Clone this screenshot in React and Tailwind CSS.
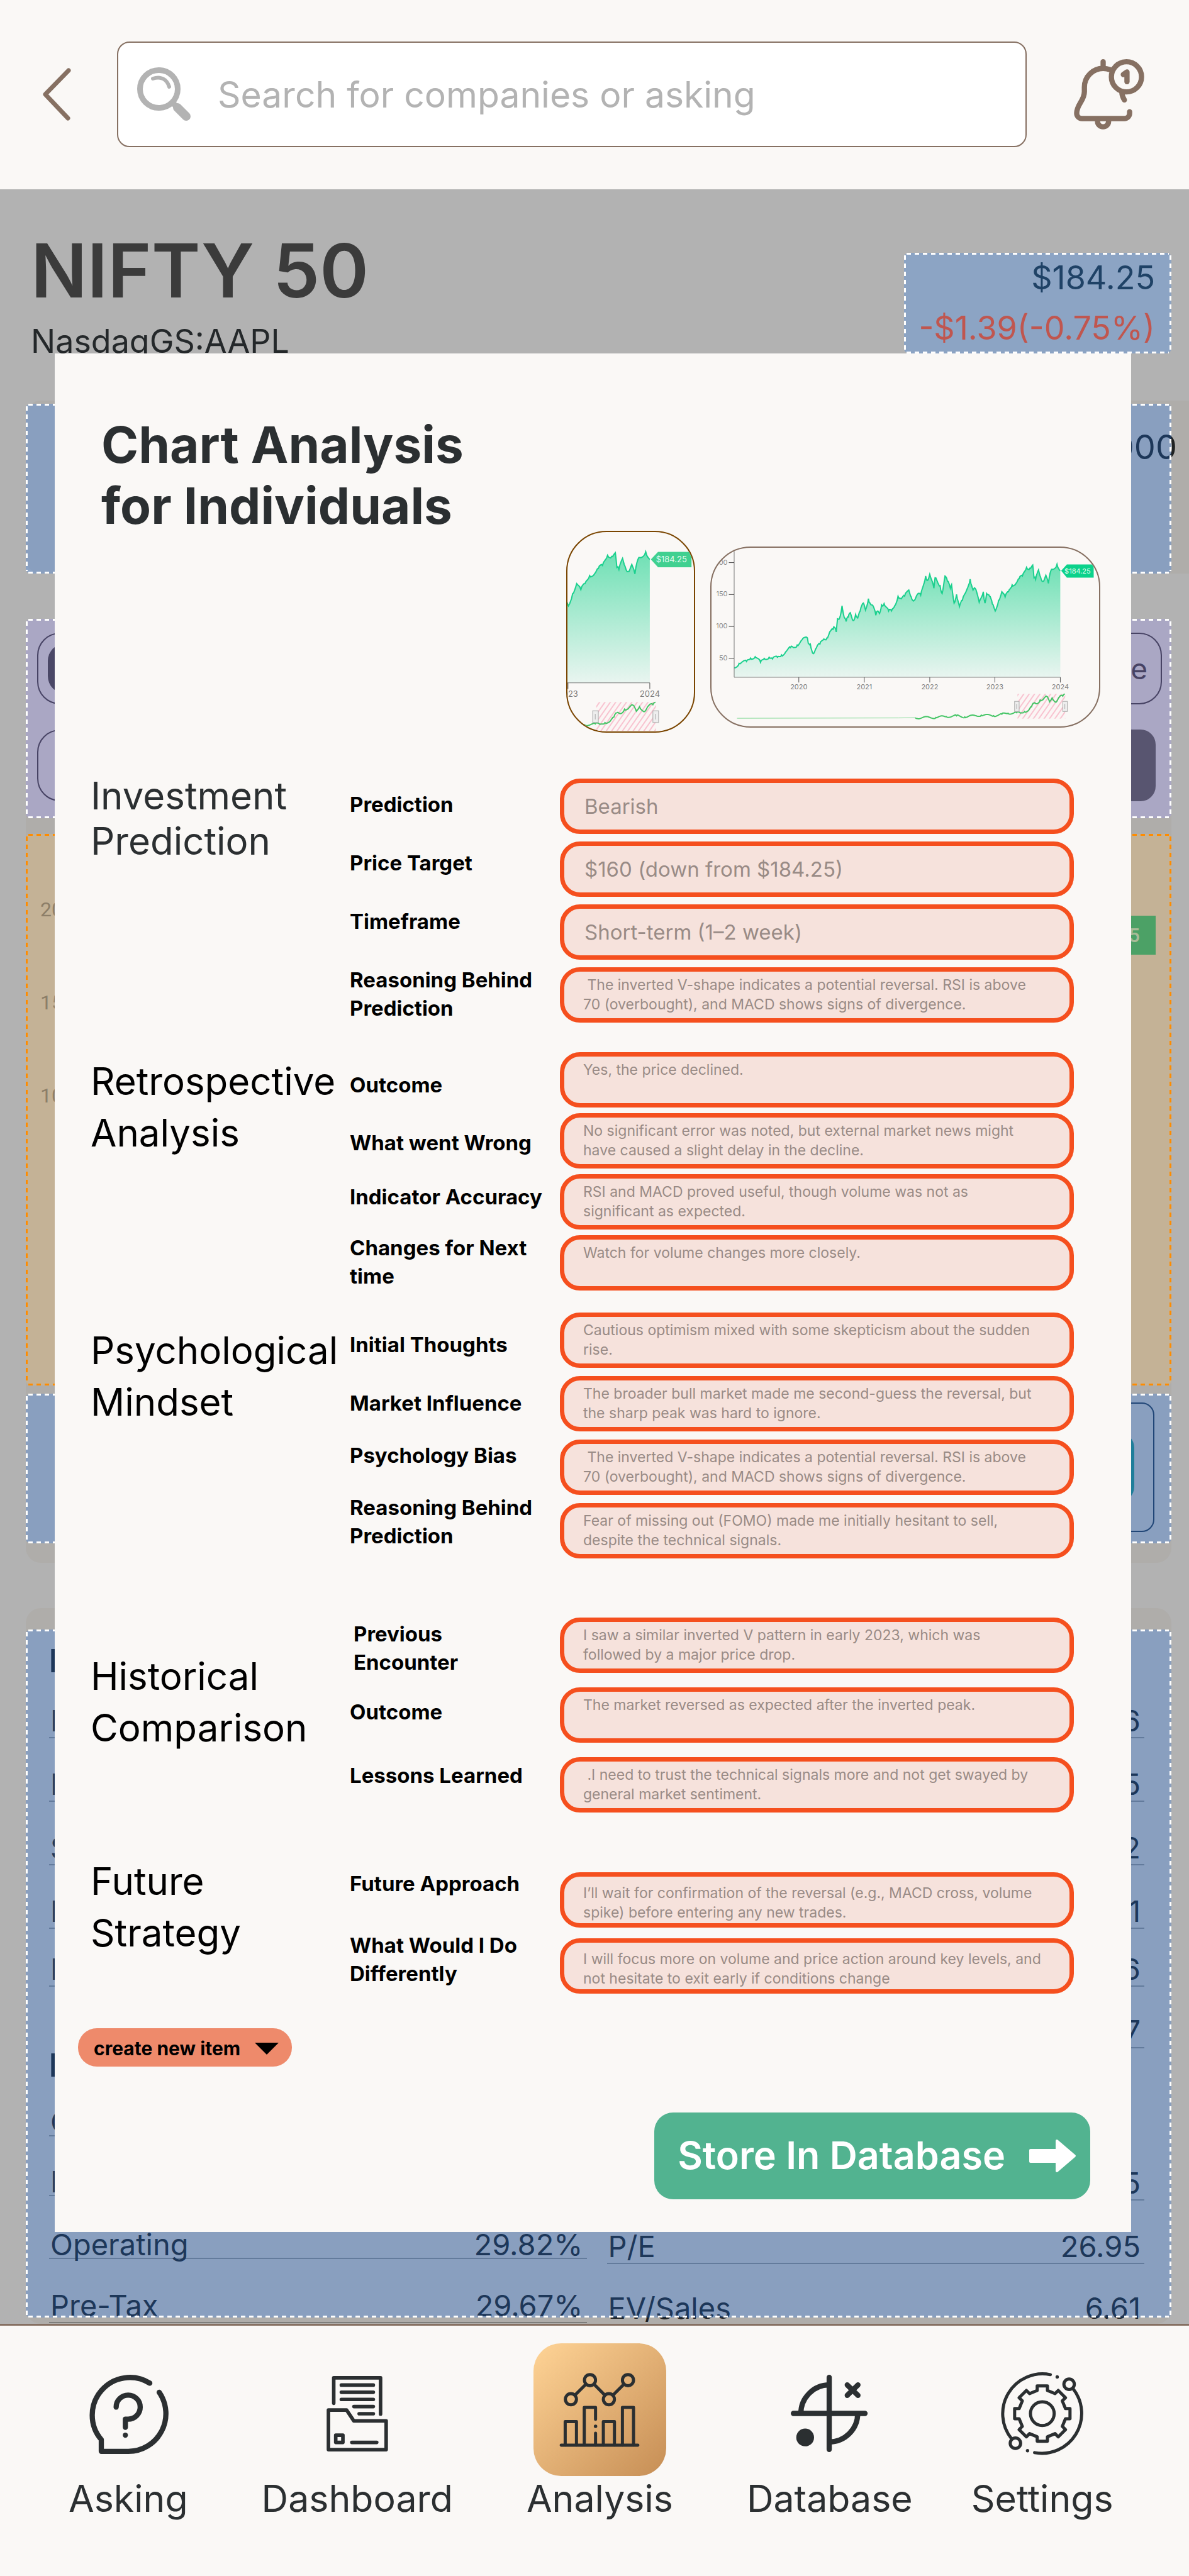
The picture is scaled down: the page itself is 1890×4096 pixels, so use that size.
import React from "react";

const SERIES = [
  [460,885],[472,860],[490,850],[500,830],[511,822],[524,855],[533,832],[545,825],[553,835],[565,825],[575,812],[585,795],
  [597,770],[604,770],[613,755],[625,725],[638,715],[640,745],[645,750],[652,805],[660,770],[668,750],[678,720],[685,715],
  [692,680],[700,665],[704,655],[708,680],[711,605],[716,600],[722,530],[727,595],[732,620],[737,595],[742,570],[749,615],
  [755,580],[760,600],[766,560],[774,515],[779,555],[786,490],[790,515],[797,530],[804,585],[808,560],[813,575],[818,525],
  [824,518],[835,560],[842,560],[850,530],[858,475],[866,490],[874,475],[884,440],[890,480],[897,500],[905,465],[913,470],
  [920,410],[925,360],[929,385],[935,350],[939,380],[945,430],[948,370],[955,400],[960,415],[965,460],[972,360],[978,390],
  [985,430],[988,410],[994,515],[1000,465],[1007,535],[1014,500],[1022,455],[1033,378],[1040,440],[1045,430],[1055,510],
  [1065,450],[1069,515],[1073,460],[1080,475],[1087,520],[1094,560],[1102,500],[1110,450],[1118,480],[1126,450],[1135,410],
  [1145,400],[1152,375],[1160,360],[1170,310],[1178,315],[1185,297],[1188,370],[1192,380],[1199,325],[1204,365],[1210,390],
  [1217,355],[1223,402],[1229,330],[1236,320],[1244,292],[1252,330],
];

const OVERVIEW_START = [[467,1175],[860,1173],[900,1172]];
const OVERVIEW = [
  [900,1172],[950,1170],[975,1165],[1000,1161],[1020,1167],[1060,1157],[1090,1160],[1110,1152],
  [1125,1146],[1146,1143],[1155,1145],[1165,1136],[1175,1130],[1182,1110],[1188,1088],[1195,1092],[1203,1070],[1210,1068],
  [1219,1050],[1226,1080],[1232,1058],[1242,1082],[1250,1052],[1258,1048],[1263,1036],
];

function roughen(points, step, amount) {
  const out = [];
  let n = 0;
  for (let i = 0; i < points.length - 1; i++) {
    const [x0, y0] = points[i];
    const [x1, y1] = points[i + 1];
    const parts = Math.max(1, Math.round((x1 - x0) / step));
    for (let k = 0; k < parts; k++) {
      n += 1;
      const wobble = k === 0 ? 0 : Math.sin(n * 12.9) * amount;
      out.push([x0 + ((x1 - x0) * k) / parts, y0 + ((y1 - y0) * k) / parts + wobble]);
    }
  }
  out.push(points[points.length - 1]);
  return out;
}

const PRICE_LINE = roughen(SERIES, 2, 9);
const OVERVIEW_LINE = roughen(OVERVIEW, 2, 6);

const WIDE = {
  id: "wide",
  x: (v) => (v - 405) * 0.6546,
  y: (v) => (v - 198) * 0.2775,
};
const CLOSE = {
  id: "close",
  x: (v) => (200 + (v - 1252) * 1.25) * 0.6546,
  y: (v) => (864 + (v - 940) * 1.16) * 0.2775,
};

function PriceChart({ view, textClass, tagFill }) {
  const { id, x, y } = view;
  const path = (pts) => pts.map(([a, b]) => `${x(a).toFixed(1)},${y(b).toFixed(1)}`).join(" ");
  const base = y(940);
  const area = `${x(460)},${base} ${path(PRICE_LINE)} ${x(1252)},${base}`;
  return (
    <svg className="block h-full w-full" aria-hidden="true">
      <defs>
        <linearGradient id={`fill-${id}`} x1="0" y1="0" x2="0" y2="1">
          <stop offset="0" stopColor="#6ee0b4" />
          <stop offset="1" stopColor="#e9f5f0" />
        </linearGradient>
        <pattern id={`hatch-${id}`} width="7" height="7" patternUnits="userSpaceOnUse" patternTransform="rotate(35)">
          <rect width="7" height="7" fill="#fbf6f5" />
          <rect width="2" height="7" fill="#f8c3d0" />
        </pattern>
      </defs>
      <polygon points={area} fill={`url(#fill-${id})`} />
      <polyline points={path(PRICE_LINE)} fill="none" stroke="#1bd08e" strokeWidth="2" />
      <path d={`M${x(460)} ${y(200)}V${base}H${x(1252)}`} fill="none" stroke="#777" strokeWidth="1" />
      {[[283, "200"], [466, "150"], [649, "100"], [831, "50"]].map(([v, t]) => (
        <g key={t}>
          <path d={`M${x(447)} ${y(v)}H${x(460)}`} stroke="#444" strokeWidth="1" />
          <text x={x(444)} y={y(v) + 3} textAnchor="end" fill="#8a8a8a" className={textClass}>{t}</text>
        </g>
      ))}
      {[[617, "2020"], [776, "2021"], [935, "2022"], [1093, "2023"], [1252, "2024"]].map(([v, t]) => (
        <g key={t}>
          <path d={`M${x(v)} ${base}V${y(970)}`} stroke="#555" strokeWidth="1" />
          <text x={x(v)} y={y(1008)} textAnchor="middle" fill="#7c7c7c" className={textClass}>{t}</text>
        </g>
      ))}
      <polygon
        points={path([[1254, 330], [1268, 293], [1333, 293], [1333, 369], [1268, 369]])}
        fill={tagFill}
      />
      <text x={x(1294)} y={y(345)} textAnchor="middle" fill="#e4fbf0" className={textClass}>$184.25</text>
      <rect x={x(1148)} y={y(1035)} width={x(1264) - x(1148)} height={y(1177) - y(1035)} fill={`url(#hatch-${id})`} />
      <polyline points={path(OVERVIEW_START)} fill="none" stroke="#7fd893" strokeWidth="1" />
      <polyline points={path(OVERVIEW_LINE)} fill="none" stroke="#45c566" strokeWidth="2" />
      {[1141, 1258].map((v) => (
        <g key={v} stroke="#a9a9a9" fill="#eeeeee">
          <rect x={x(v)} y={y(1078)} width={x(v + 11) - x(v)} height={y(1136) - y(1078)} />
          <path d={`M${x(v + 5)} ${y(1093)}V${y(1121)}`} />
        </g>
      ))}
    </svg>
  );
}

function DashedEdges({ tone }) {
  const h = {
    white: "bg-[repeating-linear-gradient(90deg,#fff_0_7px,transparent_7px_13px)]",
    orange: "bg-[repeating-linear-gradient(90deg,#ff8c00_0_7px,transparent_7px_13px)]",
  }[tone];
  const v = {
    white: "bg-[repeating-linear-gradient(180deg,#fff_0_7px,transparent_7px_13px)]",
    orange: "bg-[repeating-linear-gradient(180deg,#ff8c00_0_7px,transparent_7px_13px)]",
  }[tone];
  return (
    <>
      <span className={`absolute inset-x-1 top-0 h-[3px] ${h}`} />
      <span className={`absolute inset-x-1 bottom-0 h-[3px] ${h}`} />
      <span className={`absolute inset-y-1 left-0 w-[3px] ${v}`} />
      <span className={`absolute inset-y-1 right-0 w-[3px] ${v}`} />
    </>
  );
}

function BlueVeil() {
  return (
    <div className="pointer-events-none absolute inset-0 rounded-lg bg-[#1978ff]/25">
      <DashedEdges tone="white" />
    </div>
  );
}

function BackIcon() {
  return (
    <svg className="h-[84px] w-[46px]" viewBox="0 0 46 84" fill="none" stroke="#867062" strokeWidth="7" strokeLinecap="round" strokeLinejoin="round">
      <path d="M41 4L4 42L40 80" />
    </svg>
  );
}

function SearchIcon() {
  return (
    <svg className="h-[86px] w-[86px] shrink-0" viewBox="0 0 86 86" fill="none" stroke="#b3b3b3" strokeLinecap="round">
      <circle cx="34.5" cy="34.5" r="30" strokeWidth="9" />
      <path d="M56 56L62 62" strokeWidth="9" />
      <path d="M64 64L78 78" strokeWidth="14" />
      <path d="M25 18C37 14 47 18 51 31" strokeWidth="6" />
    </svg>
  );
}

function BellIcon() {
  return (
    <svg className="h-28 w-28" viewBox="72 72 402 402" fill="none" stroke="#867062" strokeWidth="30" strokeLinecap="round" strokeLinejoin="round">
      <path d="M239 87V118" />
      <path d="M280 133C267 128 253 125 239 125C180 125 132 173 132 232V258C132 310 88 330 88 381C88 398 101 411 118 411H360C377 411 390 398 390 381V372" />
      <path d="M346 264C347 281 352 292 360 305" />
      <path d="M207 418V427A31.500 31.500 0 0 0 270 427V418" />
      <circle cx="372" cy="173" r="86" />
      <path d="M354 160L375 145V201" />
    </svg>
  );
}

function AskingIcon() {
  return (
    <svg className="h-32 w-32" viewBox="0 0 154 154" fill="none" stroke="#2b2f31" strokeWidth="10" strokeLinecap="round" strokeLinejoin="round">
      <path d="M118 18.500A72 72 0 0 0 25.300 126.500V149H77A72 72 0 0 0 136 36" />
      <path d="M53.700 64.300A23 23 0 1 1 76.700 87.300H71.300V103" />
      <circle cx="71.300" cy="118" r="5" fill="#2b2f31" stroke="none" />
    </svg>
  );
}

function DashboardIcon() {
  return (
    <svg className="h-[120px] w-[98px]" viewBox="0 0 117 144" fill="none" stroke="#2b2f31" strokeWidth="6.8" strokeLinecap="round" strokeLinejoin="round">
      <path d="M13.500 52V3.500H102.800V72.500" />
      <path d="M28 17.300H89M28 31H89M28 44.700H89M52 58.300H89M62 72H89" />
      <path d="M3.400 65H38L51.800 85.700H113.500V140.500H3.400Z" />
      <path d="M17.300 113H31V126.700H17.300ZM48 126.700H95.500" />
    </svg>
  );
}

function AnalysisIcon() {
  return (
    <svg className="h-[118px] w-[128px]" viewBox="180 209 462 428" fill="none" stroke="#2b2f31" strokeWidth="18" strokeLinecap="round" strokeLinejoin="round">
      <circle cx="246" cy="361" r="32" />
      <circle cx="356" cy="251" r="32" />
      <circle cx="465" cy="361" r="32" />
      <circle cx="575" cy="251" r="32" />
      <path d="M270 337L332 275M380 275L441 337M489 337L551 275" />
      <path d="M213 625V490H278V625M323 625V408H388V477M388 557V625M433 625V490H497V625M543 625V408H607V625" />
      <path d="M190 626H632" />
      <circle cx="388" cy="517" r="10" fill="#2b2f31" stroke="none" />
    </svg>
  );
}

function DatabaseIcon() {
  return (
    <svg className="h-[123px] w-[123px]" viewBox="0 0 148 148" fill="none" stroke="#2b2f31" strokeWidth="10" strokeLinecap="round">
      <path d="M73.500 5V143M5 74H142" />
      <path d="M19.300 74A54.500 54.500 0 0 1 73.500 19.500M128 74A54.500 54.500 0 0 1 73.500 128.500" strokeLinecap="butt" />
      <path d="M108 19.500L128.500 39.500M128.500 19.500L108 39.500" />
      <circle cx="27.500" cy="120" r="17" fill="#2b2f31" stroke="none" />
    </svg>
  );
}

const GEAR = (() => {
  const pts = [];
  for (let k = 0; k < 8; k++) {
    const a = (k * Math.PI) / 4;
    for (const [px, py] of [[-9.8, -44.3], [-9.8, -53], [9.8, -53], [9.8, -44.3]]) {
      pts.push(
        `${(79.3 + px * Math.cos(a) - py * Math.sin(a)).toFixed(1)},${(79.3 + px * Math.sin(a) + py * Math.cos(a)).toFixed(1)}`
      );
    }
  }
  return pts.join(" ");
})();

function SettingsIcon() {
  return (
    <svg className="h-[132px] w-[132px]" viewBox="0 0 159 159" fill="none" stroke="#2b2f31" strokeWidth="6" strokeLinecap="round" strokeLinejoin="round">
      <path d="M94.700 4.600A76.300 76.300 0 0 0 20.500 127.500M138.500 32A76.300 76.300 0 0 1 64.500 154" />
      <circle cx="130.600" cy="23" r="10" />
      <circle cx="27.800" cy="136" r="10" />
      <circle cx="79.300" cy="79.300" r="22.700" />
      <polygon points={GEAR} />
      <circle cx="107.800" cy="9" r="3.200" fill="#2b2f31" stroke="none" />
      <circle cx="51" cy="150.300" r="3.200" fill="#2b2f31" stroke="none" />
    </svg>
  );
}

const SECTIONS = [
  {
    id: "investment",
    title: ["Investment", "Prediction"],
    wrap: "mt-16",
    titleClass: "leading-[72px] text-[#2b2f31]",
    labelsClass: "pt-7",
    fieldsClass: "pt-[9px] gap-3",
    rows: [
      { label: ["Prediction"], gap: "", value: "Bearish", large: true },
      { label: ["Price Target"], gap: "mt-12", value: "$160 (down from $184.25)", large: true },
      { label: ["Timeframe"], gap: "mt-12", value: "Short-term (1–2 week)", large: true },
      {
        label: ["Reasoning Behind", "Prediction"],
        gap: "mt-12",
        value: " The inverted V-shape indicates a potential reversal. RSI is above\n70 (overbought), and MACD shows signs of divergence.",
      },
    ],
  },
  {
    id: "retrospective",
    title: ["Retrospective", "Analysis"],
    wrap: "mt-[47px]",
    titleClass: "pt-[5px] leading-[82px] text-black",
    labelsClass: "pt-[30px]",
    fieldsClass: "gap-[9px]",
    rows: [
      { label: ["Outcome"], gap: "", value: "Yes, the price declined." },
      {
        label: ["What went Wrong"],
        gap: "mt-[47px]",
        value: "No significant error was noted, but external market news might\nhave caused a slight delay in the decline.",
      },
      {
        label: ["Indicator Accuracy"],
        gap: "mt-[41px]",
        value: "RSI and MACD proved useful, though volume was not as\nsignificant as expected.",
      },
      { label: ["Changes for Next", "time"], gap: "mt-9", value: "Watch for volume changes more closely." },
    ],
  },
  {
    id: "psychological",
    title: ["Psychological", "Mindset"],
    wrap: "mt-[35px]",
    titleClass: "pt-[19px] leading-[82px] text-black",
    labelsClass: "pt-[29px]",
    fieldsClass: "gap-[13px]",
    rows: [
      { label: ["Initial Thoughts"], gap: "", value: "Cautious optimism mixed with some skepticism about the sudden\nrise." },
      {
        label: ["Market Influence"],
        gap: "mt-12",
        value: "The broader bull market made me second-guess the reversal, but\nthe sharp peak was hard to ignore.",
      },
      {
        label: ["Psychology Bias"],
        gap: "mt-[38px]",
        value: " The inverted V-shape indicates a potential reversal. RSI is above\n70 (overbought), and MACD shows signs of divergence.",
      },
      {
        label: ["Reasoning Behind", "Prediction"],
        gap: "mt-[38px]",
        value: "Fear of missing out (FOMO) made me initially hesitant to sell,\ndespite the technical signals.",
      },
    ],
  },
  {
    id: "historical",
    title: ["Historical", "Comparison"],
    wrap: "mt-[94px]",
    titleClass: "pt-[52px] leading-[82px] text-black",
    labelsClass: "pt-1",
    fieldsClass: "gap-[23px]",
    rows: [
      {
        label: ["Previous", "Encounter"],
        gap: "pl-[6px]",
        value: "I saw a similar inverted V pattern in early 2023, which was\nfollowed by a major price drop.",
      },
      { label: ["Outcome"], gap: "mt-[34px]", value: "The market reversed as expected after the inverted peak." },
      {
        label: ["Lessons Learned"],
        gap: "mt-14",
        value: " .I need to trust the technical signals more and not get swayed by\ngeneral market sentiment.",
      },
    ],
  },
  {
    id: "future",
    title: ["Future", "Strategy"],
    wrap: "mt-[68px]",
    titleClass: "leading-[82px] text-black",
    labelsClass: "pt-[23px]",
    fieldsClass: "pt-[27px] gap-[17px]",
    low: true,
    rows: [
      {
        label: ["Future Approach"],
        gap: "",
        value: "I’ll wait for confirmation of the reversal (e.g., MACD cross, volume\nspike) before entering any new trades.",
      },
      {
        label: ["What Would I Do", "Differently"],
        gap: "mt-[53px]",
        value: "I will focus more on volume and price action around key levels, and\nnot hesitate to exit early if conditions change",
      },
    ],
  },
];

function Lines({ items }) {
  return items.map((t) => (
    <span key={t} className="block whitespace-nowrap">{t}</span>
  ));
}

function Section({ section }) {
  const fieldBase =
    "block h-[88px] w-full resize-none overflow-hidden rounded-[32px] border-[7px] border-[#f54f1e] bg-[#f6e2dc] pr-4 text-[#998b86] outline-none";
  return (
    <section className={`grid grid-cols-[412px_334px_1fr] items-start pl-[57px] pr-[91px] ${section.wrap}`}>
      <h2 className={`text-[60px] font-normal ${section.titleClass}`}>
        <Lines items={section.title} />
      </h2>
      <div className={`flex flex-col ${section.labelsClass}`}>
        {section.rows.map((row, i) => (
          <label key={i} htmlFor={`${section.id}-${i}`} className={`text-[33px] font-bold leading-[45px] text-black ${row.gap}`}>
            <Lines items={row.label} />
          </label>
        ))}
      </div>
      <div className={`flex flex-col ${section.fieldsClass}`}>
        {section.rows.map((row, i) =>
          row.large ? (
            <input
              key={i}
              id={`${section.id}-${i}`}
              defaultValue={row.value}
              className={`${fieldBase} pl-8 text-[33px]`}
            />
          ) : (
            <textarea
              key={i}
              id={`${section.id}-${i}`}
              rows={2}
              defaultValue={row.value}
              className={`${fieldBase} whitespace-pre pl-[30px] text-[23px] leading-[31px] ${section.low ? "pt-[11px]" : "pt-[6px]"}`}
            />
          )
        )}
      </div>
    </section>
  );
}

function AnalysisDialog() {
  return (
    <div role="dialog" aria-labelledby="dialog-title" className="absolute left-[87px] right-[92px] top-[261px] bg-[#faf8f6] pb-[52px] pt-24">
      <div className="flex items-start justify-between pl-[74px] pr-[49px]">
        <h1 id="dialog-title" className="text-[80px] font-bold leading-[97px] text-[#2b2f31]">
          <Lines items={["Chart Analysis", "for Individuals"]} />
        </h1>
        <div className="flex items-start gap-6 pt-[186px]">
          <div className="h-[321px] w-[205px] overflow-hidden rounded-[64px] border-2 border-[#7a4500]">
            <PriceChart view={CLOSE} textClass="text-[13px]" tagFill="#40d090" />
          </div>
          <div className="mt-[25px] h-[288px] w-[620px] overflow-hidden rounded-[64px] border-2 border-[#867062]">
            <PriceChart view={WIDE} textClass="text-[11px]" tagFill="#0bd28b" />
          </div>
        </div>
      </div>

      {SECTIONS.map((s) => (
        <Section key={s.id} section={s} />
      ))}

      <button type="button" className="ml-[37px] mt-[55px] flex h-[61px] w-[340px] items-center justify-between rounded-[30px] bg-[#ee8a6b] pl-[25px] pr-[21px] pt-1 text-[30px] font-bold text-black">
        create new item
        <svg className="h-[19px] w-[38px]" viewBox="0 0 38 19">
          <path d="M0 0H38L19 19Z" fill="#000" />
        </svg>
      </button>

      <div className="mt-[73px] flex justify-end pr-[65px]">
        <button type="button" className="flex h-[138px] items-center gap-[37px] rounded-[30px] bg-[#52b390] pl-[37px] pr-[22px] text-[61px] font-semibold text-white">
          Store In Database
          <svg className="h-[54px] w-[76px]" viewBox="0 0 76 54" fill="#fff" stroke="#fff" strokeWidth="4" strokeLinejoin="round">
            <path d="M3 18H45V3L73 27L45 51V36H3Z" />
          </svg>
        </button>
      </div>
    </div>
  );
}

function StatRow({ label, value, className = "h-[98px]", textClass = "leading-[52px]" }) {
  return (
    <div className={`flex shrink-0 items-end justify-between border-b-2 border-[#7d7d7b] pl-[2px] pr-[6px] text-[47px] ${textClass} ${className}`}>
      <span>{label}</span>
      <span>{value}</span>
    </div>
  );
}

function Background() {
  return (
    <div className="flex flex-col">
      <div className="flex items-start justify-between pb-[62px] pl-[49px] pr-7">
        <div className="pt-[69px]">
          <p className="text-[118px] font-semibold leading-[120px] text-[#3b3b3b]">NIFTY 50</p>
          <p className="mt-[21px] text-[52px] leading-[64px] text-[#24282a]">NasdaqGS:AAPL</p>
        </div>
        <div className="relative mt-[101px] w-[425px] rounded-lg bg-[#8ca4c4] pr-[26px] text-right text-[52px] leading-[80px]">
          <p className="text-[#1f4266]">$184.25</p>
          <p className="whitespace-nowrap text-[#c0564f]">-$1.39(-0.75%)</p>
          <DashedEdges tone="white" />
        </div>
      </div>

      <div className="ml-[41px] rounded-l-3xl bg-[#afadaa] pr-7 pt-[5px]">
        <div className="relative h-[270px] pt-[37px]">
          <p className="-mr-[9px] text-right text-[54px] leading-[64px] text-[#1f2222]">000</p>
          <BlueVeil />
        </div>
      </div>

      <div className="ml-[41px] mr-7 mt-[72px] flex flex-col rounded-3xl bg-[#afadaa] pb-[31px]">
        <div className="relative flex flex-col gap-10 rounded-lg bg-[#aaa7c4] pb-[27px] pl-[18px] pr-[15px] pt-[22px]">
          <div className="flex h-[114px] items-center justify-between rounded-[36px] border-2 border-[#474364] pl-[15px] pr-[21px]">
            <span className="h-[80px] w-[120px] rounded-[28px] bg-[#4a4766]" />
            <span className="text-[46px] leading-[56px] text-[#474364]">e</span>
          </div>
          <div className="flex h-[114px] items-center justify-between">
            <span className="h-[114px] w-[400px] rounded-[36px] border-2 border-[#474364]" />
            <span className="mr-[10px] h-[114px] w-[400px] rounded-3xl bg-[#585570]" />
          </div>
          <DashedEdges tone="white" />
        </div>

        <div className="relative mt-[25px] flex h-[877px] items-start justify-between rounded-lg bg-[#c4b296] pl-[23px] pr-[25px] font-['Roboto',sans-serif] text-[32px] leading-[40px]">
          <div className="flex flex-col gap-[108px] pt-[100px] text-right text-[#8d7e68]">
            <span>200</span>
            <span>150</span>
            <span>100</span>
          </div>
          <span className="mt-[130px] flex h-[62px] w-[160px] items-center justify-end bg-[#4ca166] pr-[25px] font-medium text-[#a9bb98]">5</span>
          <DashedEdges tone="orange" />
        </div>

        <div className="relative mt-[13px] flex h-[238px] justify-end px-[27px] pb-[18px] pt-[14px]">
          <div className="flex w-1/2 items-center justify-end rounded-[20px] border-2 border-[#24364a] pr-[30px]">
            <span className="h-[110px] w-[300px] rounded-3xl bg-[#228078]" />
          </div>
          <BlueVeil />
        </div>
      </div>

      <div className="ml-[41px] mr-7 mt-[72px] rounded-3xl bg-[#afadaa] pb-[10px] pt-[34px]">
        <div className="relative flex h-[1094px] gap-8 pl-[37px] pr-[43px] text-[#1f2222]">
          <div className="flex flex-1 flex-col">
            <p className="mt-5 h-[60px] text-[51px] font-bold leading-[60px]">E</p>
            <StatRow label="M" className="h-[93px]" />
            <StatRow label="E" className="h-[101px]" />
            <StatRow label="S" className="h-[101px]" />
            <StatRow label="F" className="h-[101px]" />
            <StatRow label="E" className="h-[92px]" />
            <p className="mt-[95px] h-[60px] text-[51px] font-bold leading-[60px]">M</p>
            <StatRow label="C" className="h-[83px]" textClass="leading-[42px]" />
            <StatRow label="E" className="h-[95px]" textClass="leading-[42px]" />
            <StatRow label="Operating" value="29.82%" className="h-[100px]" textClass="leading-[42px]" />
            <StatRow label="Pre-Tax" value="29.67%" className="h-[102px]" />
          </div>
          <div className="flex flex-1 flex-col">
            <StatRow value="6" className="mt-[80px] h-[93px]" />
            <StatRow value="5" className="h-[101px]" />
            <StatRow value="2" className="h-[101px]" />
            <StatRow value="1" className="h-[101px]" />
            <StatRow value="6" className="h-[92px]" />
            <StatRow value="7" className="h-[98px]" />
            <StatRow value="5" className="mt-[144px] h-[98px]" />
            <StatRow label="P/E" value="26.95" className="h-[101px]" />
            <StatRow label="EV/Sales" value="6.61" />
          </div>
          <BlueVeil />
        </div>
      </div>
    </div>
  );
}

function NavItem({ label, icon, active, className = "" }) {
  return (
    <a href="#" aria-current={active ? "page" : undefined} className={`flex flex-col items-center text-[59px] leading-[72px] text-[#2b2f31] ${className}`}>
      {active ? (
        <span className="flex h-[211px] w-[211px] items-center justify-center rounded-[44px] bg-linear-to-br from-[#ffd496] to-[#c68e55]">{icon}</span>
      ) : (
        <span className="flex h-[211px] items-center justify-center pt-3">{icon}</span>
      )}
      <span>{label}</span>
    </a>
  );
}

export default function App() {
  return (
    <div className="flex min-h-screen flex-col bg-[#faf8f6] font-['Inter',sans-serif]">
      <header className="flex items-center pb-[67px] pl-[68px] pr-[71px] pt-[66px]">
        <button type="button" aria-label="Back">
          <BackIcon />
        </button>
        <label className="ml-[72px] mr-[75px] flex h-[168px] flex-1 items-center gap-[42px] rounded-[20px] border-2 border-[#867062] bg-white pl-[30px]">
          <SearchIcon />
          <input
            type="search"
            aria-label="Search"
            placeholder="Search for companies or asking"
            className="h-full w-full bg-transparent text-[57px] outline-none placeholder:text-[#b3b3b3]"
          />
        </label>
        <button type="button" aria-label="Notifications, 1 new">
          <BellIcon />
        </button>
      </header>

      <main className="relative flex-1 overflow-hidden bg-[#b2b2b2]">
        <Background />
        <AnalysisDialog />
      </main>

      <nav className="flex gap-[117px] border-t-[3px] border-[#867062] pb-[87px] pl-[109px] pt-7">
        <NavItem label="Asking" icon={<AskingIcon />} />
        <NavItem label="Dashboard" icon={<DashboardIcon />} />
        <NavItem label="Analysis" icon={<AnalysisIcon />} active />
        <NavItem label="Database" icon={<DatabaseIcon />} />
        <NavItem label="Settings" icon={<SettingsIcon />} className="-ml-6" />
      </nav>
    </div>
  );
}
